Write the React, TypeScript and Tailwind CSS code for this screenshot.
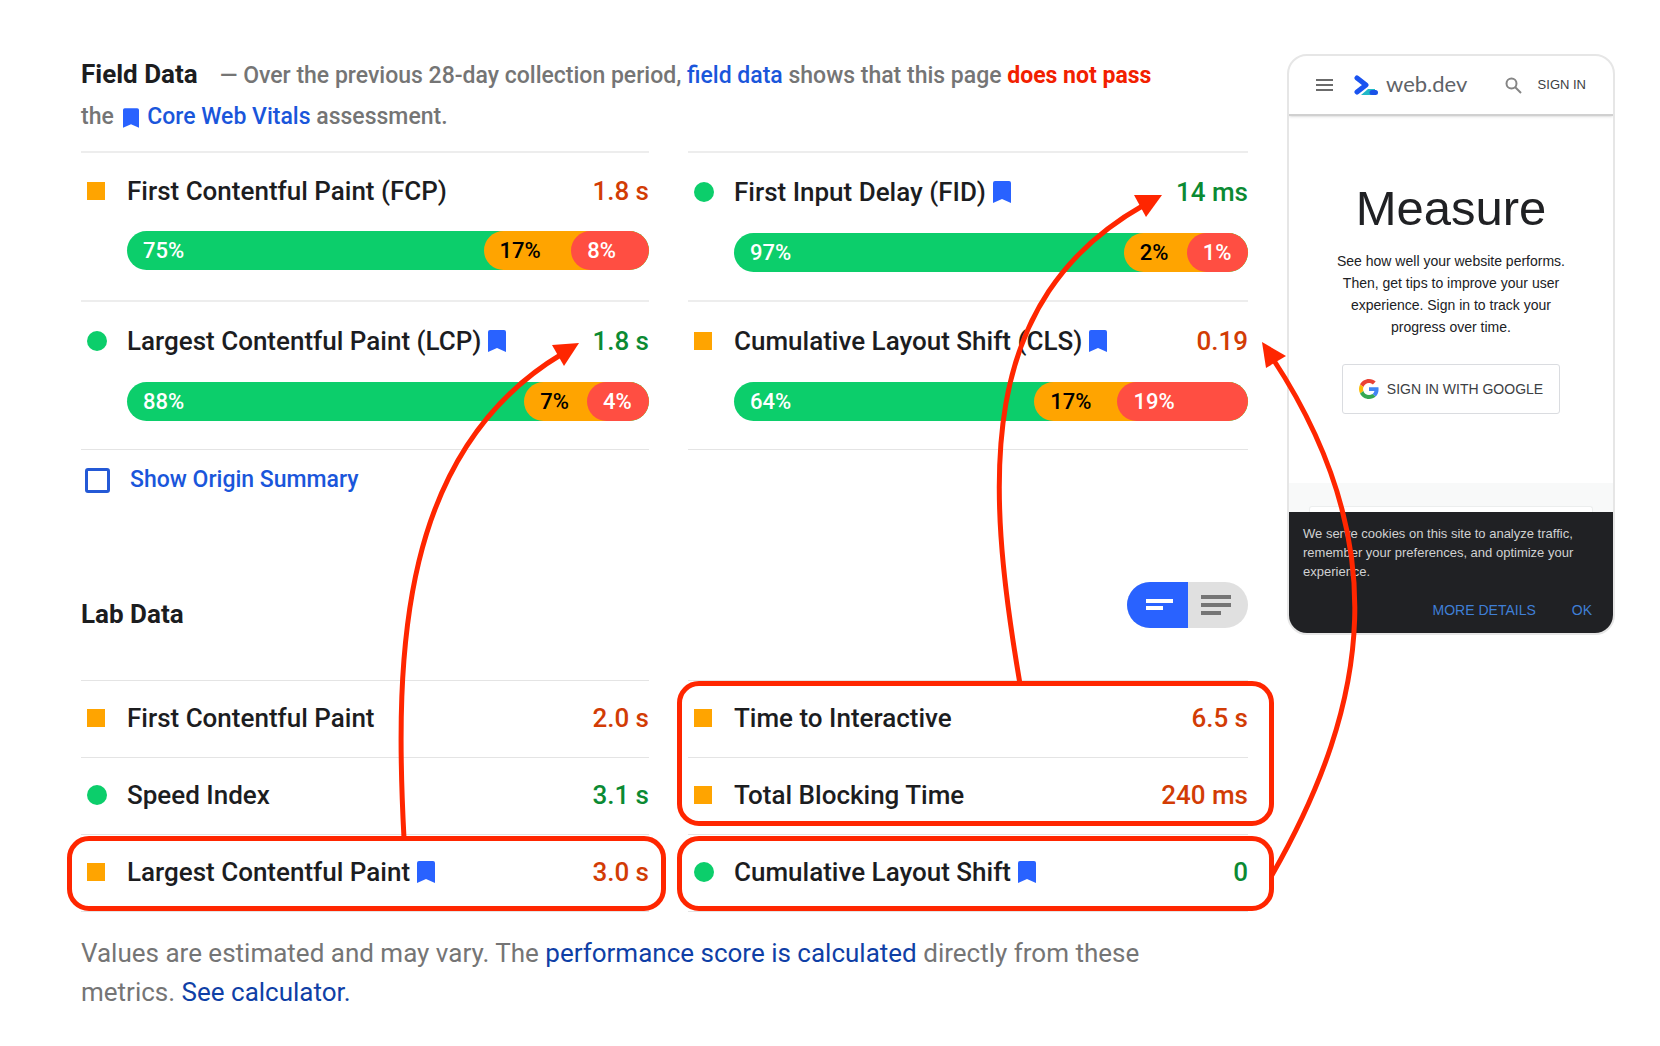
import type { ReactNode } from "react";

type Rating = "good" | "average" | "poor";

interface Distribution {
  good: number;
  average: number;
  poor: number;
  // where the average and poor segments begin, in percent of the bar
  averageStart: number;
  poorStart: number;
}

interface LabMetric {
  name: string;
  value: string;
  rating: Rating;
  vital?: boolean;
}

interface FieldMetric extends LabMetric {
  distribution: Distribution;
}

const fieldMetrics: FieldMetric[] = [
  {
    name: "First Contentful Paint (FCP)",
    value: "1.8 s",
    rating: "average",
    distribution: { good: 75, average: 17, poor: 8, averageStart: 68.3, poorStart: 85.1 },
  },
  {
    name: "First Input Delay (FID)",
    value: "14 ms",
    rating: "good",
    vital: true,
    distribution: { good: 97, average: 2, poor: 1, averageStart: 75.8, poorStart: 88.1 },
  },
  {
    name: "Largest Contentful Paint (LCP)",
    value: "1.8 s",
    rating: "good",
    vital: true,
    distribution: { good: 88, average: 7, poor: 4, averageStart: 76.1, poorStart: 88.1 },
  },
  {
    name: "Cumulative Layout Shift (CLS)",
    value: "0.19",
    rating: "average",
    vital: true,
    distribution: { good: 64, average: 17, poor: 19, averageStart: 58.4, poorStart: 74.6 },
  },
];

const labLeft: LabMetric[] = [
  { name: "First Contentful Paint", value: "2.0 s", rating: "average" },
  { name: "Speed Index", value: "3.1 s", rating: "good" },
  { name: "Largest Contentful Paint", value: "3.0 s", rating: "average", vital: true },
];

const labRight: LabMetric[] = [
  { name: "Time to Interactive", value: "6.5 s", rating: "average" },
  { name: "Total Blocking Time", value: "240 ms", rating: "average" },
  { name: "Cumulative Layout Shift", value: "0", rating: "good", vital: true },
];

const valueColor: Record<Rating, string> = {
  good: "text-[#0b8a33]",
  average: "text-[#d23c05]",
  poor: "text-[#d23c05]",
};

const ratingIcon: Record<Rating, ReactNode> = {
  good: <span className="size-5 rounded-full bg-[#0cce6b]" />,
  average: <span className="size-[18px] bg-[#ffa400]" />,
  poor: <span className="size-[18px] bg-[#ff4e42]" />,
};

const Bookmark = ({ className }: { className: string }) => (
  <svg viewBox="0 0 18 22" className={className} aria-hidden="true">
    <path
      d="M2 0h14a2 2 0 0 1 2 2v20l-9-4-9 4V2a2 2 0 0 1 2-2z"
      fill="#2962ff"
    />
  </svg>
);

const MetricTitle = ({ name, value, rating, vital }: LabMetric) => (
  <div className="flex flex-1 items-center text-[26px] leading-[38px]">
    <span className="flex w-[46px] shrink-0 pl-[6px]">{ratingIcon[rating]}</span>
    <h3 className="flex items-center gap-[7px] font-medium text-[#1c1d1f]">
      {name}
      {vital && <Bookmark className="h-[22px] w-[18px]" />}
    </h3>
    <span className={`ml-auto font-medium ${valueColor[rating]}`}>{value}</span>
  </div>
);

const DistributionBar = ({ distribution }: { distribution: Distribution }) => {
  const { good, average, poor, averageStart, poorStart } = distribution;
  const averageWidth = 100 - averageStart;
  const poorWidth = ((100 - poorStart) / averageWidth) * 100;

  return (
    <div className="ml-[46px] flex h-[39px] items-center justify-between overflow-hidden rounded-full bg-[#0cce6b] text-[22px] font-medium text-white">
      <span className="pl-4">{good}%</span>
      <div
        className="flex h-full items-center justify-between rounded-full bg-[#ffa400]"
        style={{ width: `${averageWidth}%` }}
      >
        <span className="pl-4 text-black">{average}%</span>
        <div
          className="flex h-full items-center rounded-full bg-[#ff4e42] pl-4"
          style={{ width: `${poorWidth}%` }}
        >
          {poor}%
        </div>
      </div>
    </div>
  );
};

const FieldRow = ({ distribution, ...metric }: FieldMetric) => (
  <div className="border-t-2 border-[#ededed] pt-[18px] pb-7">
    <div className={`flex ${metric.vital ? "h-[41px]" : "h-[39px]"}`}>
      <MetricTitle {...metric} />
    </div>
    <div className="mt-[21px]">
      <DistributionBar distribution={distribution} />
    </div>
  </div>
);

const LabRow = (metric: LabMetric) => (
  <div className="flex h-[77px] border-t border-[#e4e4e4] pb-[2px]">
    <MetricTitle {...metric} />
  </div>
);

const Highlight = ({ className }: { className: string }) => (
  <div
    className={`pointer-events-none absolute rounded-[22px] border-[5px] border-[#ff2600] ${className}`}
  />
);

const Arrows = () => (
  <svg
    className="pointer-events-none absolute inset-0 size-full"
    fill="none"
    stroke="#ff2600"
    strokeWidth="5"
    aria-hidden="true"
  >
    <path d="M404 838C394 650 401 450 562 354" />
    <path d="M579 343l-27 2 12 21z" fill="#ff2600" stroke="none" />
    <path d="M1020 684C985 480 976 300 1144 205" />
    <path d="M1162 195l-28 0 12 22z" fill="#ff2600" stroke="none" />
    <path d="M1272 875C1372 700 1392 540 1273 359" />
    <path d="M1262 342l24 14-20 12z" fill="#ff2600" stroke="none" />
  </svg>
);

const ViewToggle = () => (
  <div className="flex h-[46px] w-[121px] overflow-hidden rounded-full bg-[#e0e0e0]">
    <button
      type="button"
      aria-label="Compact view"
      className="flex w-[61px] items-center justify-center bg-[#2962ff] pl-1"
    >
      <svg width="27" height="12" viewBox="0 0 27 12" fill="#fff">
        <path d="M0 0h27v4H0zM0 7h17v4H0z" />
      </svg>
    </button>
    <button
      type="button"
      aria-label="Expanded view"
      className="flex flex-1 items-center justify-center pr-1"
    >
      <svg width="30" height="22" viewBox="0 0 30 22" fill="#757575">
        <path d="M0 1h30v4H0zM0 9h30v4H0zM0 17h20v4H0z" />
      </svg>
    </button>
  </div>
);

const WebDevLogo = () => (
  <svg width="24" height="20" viewBox="0 0 24 20" fill="none" aria-hidden="true">
    <path d="M7 20l7-6h7v6z" fill="#20b8c8" />
    <path d="M18 17.500h3.500" stroke="#1a53e8" strokeWidth="5" strokeLinecap="round" />
    <path
      d="M3 3l9 7-9 7"
      stroke="#1a53f0"
      strokeWidth="5"
      strokeLinecap="round"
      strokeLinejoin="round"
    />
  </svg>
);

const GoogleLogo = () => (
  <svg width="20" height="20" viewBox="0 0 48 48" aria-hidden="true">
    <path
      fill="#EA4335"
      d="M24 9.500c3.540 0 6.710 1.220 9.210 3.600l6.850-6.850C35.900 2.380 30.470 0 24 0 14.620 0 6.510 5.380 2.560 13.220l7.980 6.190C12.430 13.720 17.740 9.500 24 9.500z"
    />
    <path
      fill="#4285F4"
      d="M46.980 24.550c0-1.570-.15-3.090-.38-4.550H24v9.020h12.940c-.58 2.960-2.260 5.480-4.780 7.180l7.730 6c4.510-4.180 7.090-10.360 7.090-17.650z"
    />
    <path
      fill="#FBBC05"
      d="M10.530 28.590c-.48-1.450-.76-2.990-.76-4.590s.27-3.140.76-4.590l-7.980-6.190C.92 16.460 0 20.120 0 24c0 3.880.92 7.540 2.560 10.780l7.970-6.190z"
    />
    <path
      fill="#34A853"
      d="M24 48c6.480 0 11.930-2.130 15.890-5.810l-7.730-6c-2.150 1.450-4.920 2.300-8.160 2.300-6.260 0-11.570-4.220-13.470-9.910l-7.980 6.190C6.510 42.620 14.620 48 24 48z"
    />
  </svg>
);

const PhonePreview = () => (
  <aside className="flex w-[328px] shrink-0 flex-col overflow-hidden rounded-[20px] border-2 border-[#e6e6e6] font-['Liberation_Sans',sans-serif] text-[#202124]">
    <header className="flex h-[60px] items-center border-b-2 border-[#d0d0d0] pr-[27px] pl-[27px] text-[#5f6368] shadow-sm">
      <button type="button" aria-label="Menu">
        <svg width="18" height="14" viewBox="0 0 18 14" fill="#6b6b6b">
          <path d="M0 1h17v2H0zM0 6h17v2H0zM0 11h17v2H0z" />
        </svg>
      </button>
      <a href="#" className="ml-5 flex items-center gap-2 font-[Lato,sans-serif] text-[22px]">
        <WebDevLogo />
        <span className="pb-1">web.dev</span>
      </a>
      <button type="button" aria-label="Search" className="ml-auto">
        <svg width="17" height="17" viewBox="0 0 17 17" fill="none" stroke="#858585" strokeWidth="2">
          <circle cx="6.500" cy="6.500" r="5" />
          <path d="M10 10l6 6" />
        </svg>
      </button>
      <button type="button" className="ml-4 text-[13px] text-[#3c4043]">
        SIGN IN
      </button>
    </header>
    <div className="flex flex-col items-center pt-[58px] pb-[69px]">
      <h1 className="text-[49px] leading-[68px]">Measure</h1>
      <p className="mt-2 w-[250px] text-center text-[14px] leading-[22px]">
        See how well your website performs. Then, get tips to improve your user
        experience. Sign in to track your progress over time.
      </p>
      <button
        type="button"
        className="mt-[26px] flex h-[50px] w-[218px] items-center justify-center gap-2 rounded-[3px] border border-[#dadce0] text-[14px] whitespace-nowrap text-[#3c4043]"
      >
        <GoogleLogo />
        SIGN IN WITH GOOGLE
      </button>
    </div>
    <div className="flex h-[29px] flex-col justify-end bg-[#f8f9f9] px-5">
      <div className="h-[6px] rounded-t-[3px] border border-b-0 border-[#eceeee] bg-white" />
    </div>
    <div className="flex h-[121px] flex-col bg-[#202124] px-[14px] pt-3 text-[13px] leading-[19px] text-[#d0d1d2]">
      <p>
        We serve cookies on this site to analyze traffic, remember your
        preferences, and optimize your experience.
      </p>
      <div className="mt-5 flex justify-end gap-9 pr-[7px] text-[14px] text-[#3f7fd6]">
        <a href="#">MORE DETAILS</a>
        <a href="#">OK</a>
      </div>
    </div>
  </aside>
);

const App = () => (
  <div className="relative flex min-h-screen items-start gap-[39px] bg-white pt-[54px] pr-[45px] pb-8 pl-[81px] font-[Roboto,sans-serif]">
    <main className="min-w-0 flex-1">
      <section>
        <p className="text-[23px] leading-[41px] font-medium text-[#757575]">
          <span className="mr-[22px] text-[26px] font-bold text-[#1c1d1f]">Field Data</span>
          — Over the previous 28-day collection period,{" "}
          <a href="#" className="text-[#1a56db]">field data</a> shows that this page{" "}
          <strong className="font-bold text-[#f22000]">does not pass</strong>
          <br />
          the <Bookmark className="mr-[2px] ml-1 inline h-5 w-4" />{" "}
          <a href="#" className="text-[#1a56db]">Core Web Vitals</a> assessment.
        </p>
        <div className="mt-[14px] grid grid-cols-[568fr_560fr] gap-x-[39px]">
          {fieldMetrics.map((metric) => (
            <FieldRow key={metric.name} {...metric} />
          ))}
          <div className="border-t border-[#e4e4e4]" />
          <div className="border-t border-[#e4e4e4]" />
        </div>
        <label className="mt-[10px] flex h-10 items-center gap-5 pl-[4px] text-[23px] font-medium text-[#1a56db]">
          <input
            type="checkbox"
            className="size-[25px] appearance-none rounded-[3px] border-[3px] border-[#2459d6]"
          />
          Show Origin Summary
        </label>
      </section>

      <section className="mt-[82px]">
        <div className="flex h-[98px] items-start justify-between">
          <h2 className="pt-[13px] text-[26px] leading-[38px] font-bold text-[#1c1d1f]">Lab Data</h2>
          <ViewToggle />
        </div>
        <div className="grid grid-cols-[568fr_560fr] gap-x-[39px]">
          <div className="border-b border-[#e4e4e4]">
            <LabRow {...labLeft[0]} />
            <LabRow {...labLeft[1]} />
            <div className="relative">
              <LabRow {...labLeft[2]} />
              <Highlight className="top-[2px] -right-[17px] bottom-0 -left-[14px]" />
            </div>
          </div>
          <div className="border-b border-[#e4e4e4]">
            <div className="relative">
              <LabRow {...labRight[0]} />
              <LabRow {...labRight[1]} />
              <Highlight className="top-[1px] -right-[26px] bottom-[8px] -left-[11px]" />
            </div>
            <div className="relative">
              <LabRow {...labRight[2]} />
              <Highlight className="top-[2px] -right-[26px] bottom-0 -left-[11px]" />
            </div>
          </div>
        </div>
        <p className="mt-[22px] text-[26px] leading-[39px] text-[#757575]">
          Values are estimated and may vary. The{" "}
          <a href="#" className="text-[#0f3fa6]">performance score is calculated</a> directly
          from these
          <br />
          metrics. <a href="#" className="text-[#0f3fa6]">See calculator.</a>
        </p>
      </section>
    </main>
    <PhonePreview />
    <Arrows />
  </div>
);

export default App;
